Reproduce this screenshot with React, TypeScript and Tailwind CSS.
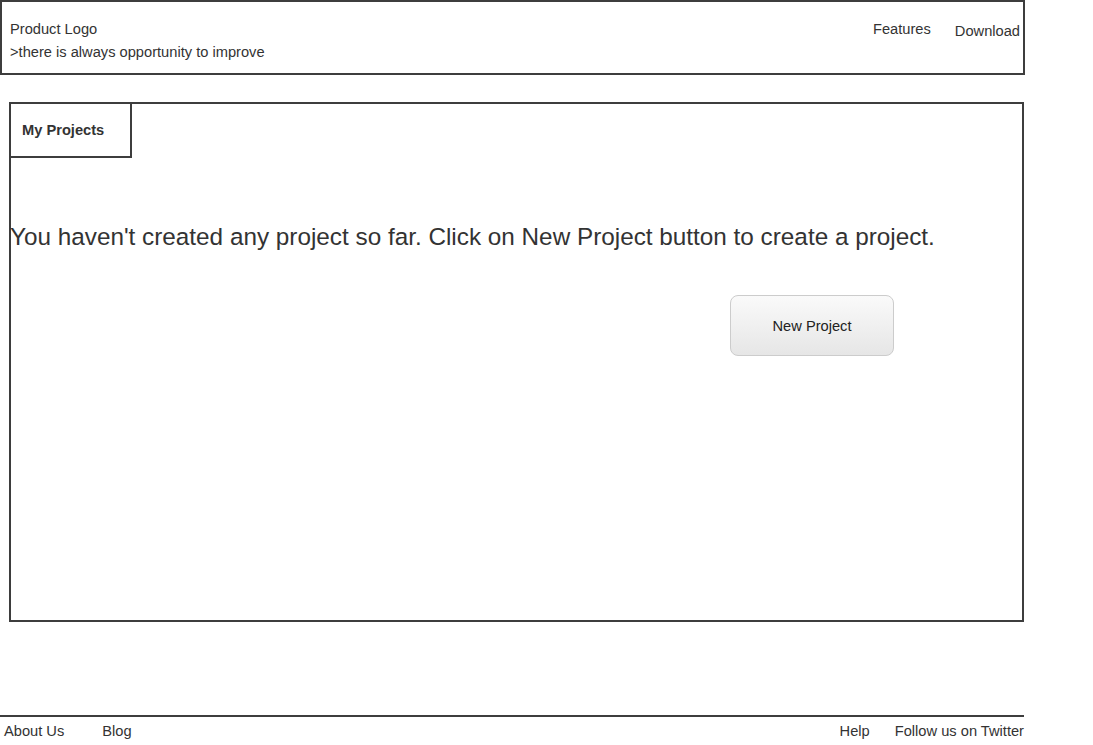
export default function App() {
  return (
    <div className="w-[1093px] h-[745px] bg-white text-[#333] font-['Liberation_Sans',Arial,sans-serif] flex flex-col">
      <header className="w-[1025px] h-[75px] border-2 border-[#3d3d3d] flex justify-between">
        <div className="pl-2 pt-[18px]">
          <div className="text-[14.67px] leading-[18px]">Product Logo</div>
          <div className="text-[14.67px] leading-[18px] mt-[5px]">&gt;there is always opportunity to improve</div>
        </div>
        <nav className="flex items-start gap-6 pr-[3px] pt-[18px] text-[14.67px]">
          <span className="leading-[18px]">Features</span>
          <span className="leading-[18px] mt-[2px]">Download</span>
        </nav>
      </header>

      <main className="ml-[9px] mt-[27px] w-[1015px] h-[520px] border-2 border-[#3d3d3d] flex flex-col">
        <div className="w-[121px] h-[54px] border-r-2 border-b-2 border-[#3d3d3d] flex items-center pl-[11px] text-[14.67px] font-bold">
          My Projects
        </div>
        <p className="mt-[65px] text-[24.3px] leading-[27px] -ml-[1px]">
          You haven&apos;t created any project so far. Click on New Project button to create a project.
        </p>
        <div className="mt-[45px] ml-[719px]">
          <button className="w-[164px] h-[61px] rounded-[8px] border border-[#cccccc] bg-gradient-to-b from-[#fafafa] to-[#e6e6e6] text-[14.67px] text-[#222]">
            New Project
          </button>
        </div>
      </main>

      <footer className="mt-[93px] w-[1024px] border-t-2 border-[#3d3d3d] flex justify-between text-[14.67px] pt-[3px]">
        <div className="flex">
          <span className="ml-[4px]">About Us</span>
          <span className="ml-[38px]">Blog</span>
        </div>
        <div className="flex gap-[25px]">
          <span>Help</span>
          <span>Follow us on Twitter</span>
        </div>
      </footer>
    </div>
  );
}
